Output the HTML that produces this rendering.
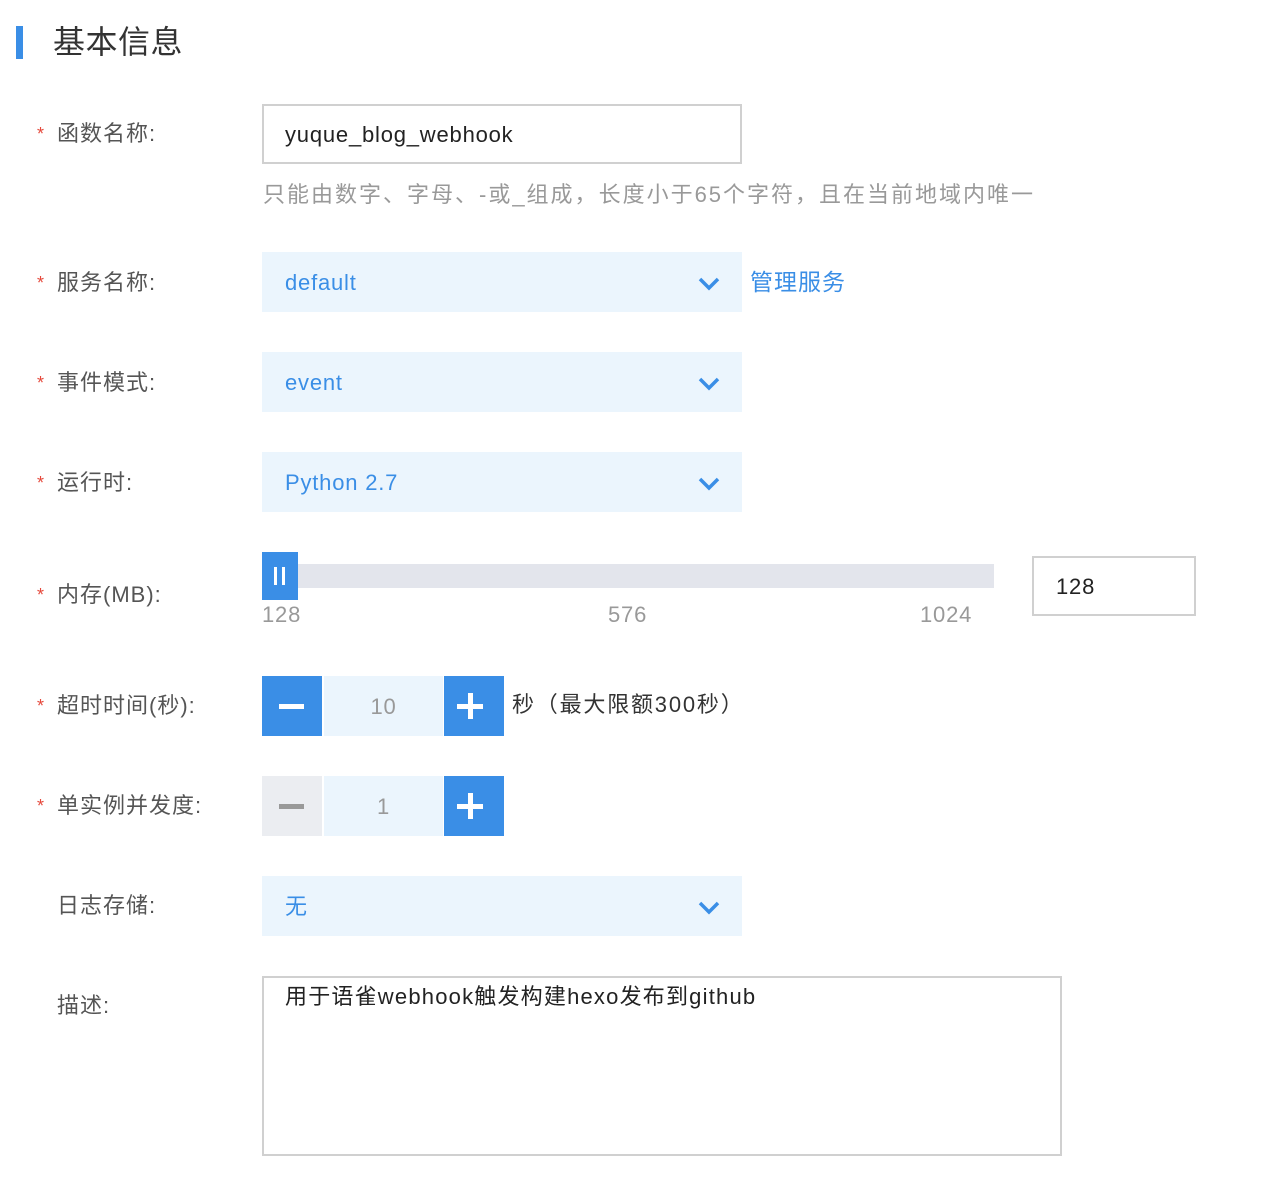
<!DOCTYPE html>
<html><head><meta charset="utf-8"><style>
body{margin:0;width:1266px;height:1194px;background:#fff;position:relative;overflow:hidden;font-family:"Liberation Sans","Noto Sans CJK SC",sans-serif;letter-spacing:0.8px;}
.a{position:absolute;white-space:nowrap;}
.lbl{position:absolute;left:37px;font-size:22px;color:#555;line-height:30px;letter-spacing:1px;}
.lbl i{font-style:normal;color:#e5483b;font-size:18px;display:inline-block;width:20px;vertical-align:top;}
.sel{position:absolute;left:262px;width:480px;height:60px;background:#ebf5fd;color:#3a8ee6;font-size:22px;line-height:62px;}
.sel span{position:absolute;left:23px;}
.sel svg{position:absolute;left:436px;top:25px;}
.btn{position:absolute;width:60px;height:60px;background:#3a8ee6;}
</style></head><body>
<div class="a" style="left:16px;top:26px;width:7px;height:33px;background:#3a8ee6"></div>
<div class="a" style="left:53px;top:22px;font-size:32px;color:#333;line-height:40px;letter-spacing:0.5px">基本信息</div>

<div class="lbl" style="top:119px"><i>*</i>函数名称:</div>
<div class="a" style="left:262px;top:104px;width:476px;height:56px;border:2px solid #d0d0d0;font-size:22px;line-height:58px;color:#222;text-indent:21px">yuque_blog_webhook</div>
<div class="a" style="left:263px;top:180px;font-size:22px;color:#999;line-height:30px;letter-spacing:2px">只能由数字、字母、-或_组成，长度小于65个字符，且在当前地域内唯一</div>

<div class="lbl" style="top:268px"><i>*</i>服务名称:</div>
<div class="sel" style="top:252px"><span>default</span><svg width="22" height="14"><path d="M2 2l9 9 9-9" stroke="#3a8ee6" stroke-width="3.5" fill="none"/></svg></div>
<div class="a" style="left:750px;top:267px;font-size:23px;color:#3a8ee6;line-height:30px;letter-spacing:1px">管理服务</div>

<div class="lbl" style="top:368px"><i>*</i>事件模式:</div>
<div class="sel" style="top:352px"><span>event</span><svg width="22" height="14"><path d="M2 2l9 9 9-9" stroke="#3a8ee6" stroke-width="3.5" fill="none"/></svg></div>

<div class="lbl" style="top:468px"><i>*</i>运行时:</div>
<div class="sel" style="top:452px"><span>Python 2.7</span><svg width="22" height="14"><path d="M2 2l9 9 9-9" stroke="#3a8ee6" stroke-width="3.5" fill="none"/></svg></div>

<div class="lbl" style="top:580px"><i>*</i>内存(MB):</div>
<div class="a" style="left:262px;top:564px;width:732px;height:24px;background:#e3e5ec"></div>
<div class="a" style="left:262px;top:552px;width:36px;height:48px;background:#3a8ee6"><div class="a" style="left:12px;top:15px;width:3px;height:18px;background:#fff"></div><div class="a" style="left:20px;top:15px;width:3px;height:18px;background:#fff"></div></div>
<div class="a" style="left:262px;top:600px;font-size:22px;color:#999;line-height:30px">128</div>
<div class="a" style="left:608px;top:600px;font-size:22px;color:#999;line-height:30px">576</div>
<div class="a" style="left:920px;top:600px;font-size:22px;color:#999;line-height:30px">1024</div>
<div class="a" style="left:1032px;top:556px;width:160px;height:56px;border:2px solid #d0d0d0;font-size:22px;line-height:58px;color:#222;text-indent:22px">128</div>

<div class="lbl" style="top:691px"><i>*</i>超时时间(秒):</div>
<div class="btn" style="left:262px;top:676px"><div class="a" style="left:17px;top:28px;width:25px;height:5px;background:#fff"></div></div>
<div class="a" style="left:324px;top:676px;width:119px;height:60px;background:#ebf5fd;color:#999;font-size:22px;line-height:62px;text-align:center">10</div>
<div class="btn" style="left:444px;top:676px"><div class="a" style="left:13px;top:28px;width:26px;height:5px;background:#fff"></div><div class="a" style="left:24px;top:17px;width:5px;height:26px;background:#fff"></div></div>
<div class="a" style="left:512px;top:690px;font-size:22px;color:#333;line-height:30px;letter-spacing:1.8px">秒（最大限额300秒）</div>

<div class="lbl" style="top:791px"><i>*</i>单实例并发度:</div>
<div class="btn" style="left:262px;top:776px;background:#ebedf1"><div class="a" style="left:17px;top:28px;width:25px;height:5px;background:#999"></div></div>
<div class="a" style="left:324px;top:776px;width:119px;height:60px;background:#ebf5fd;color:#999;font-size:22px;line-height:62px;text-align:center">1</div>
<div class="btn" style="left:444px;top:776px"><div class="a" style="left:13px;top:28px;width:26px;height:5px;background:#fff"></div><div class="a" style="left:24px;top:17px;width:5px;height:26px;background:#fff"></div></div>

<div class="lbl" style="top:891px"><i></i>日志存储:</div>
<div class="sel" style="top:876px"><span>无</span><svg width="22" height="14"><path d="M2 2l9 9 9-9" stroke="#3a8ee6" stroke-width="3.5" fill="none"/></svg></div>

<div class="lbl" style="top:991px"><i></i>描述:</div>
<div class="a" style="left:262px;top:976px;width:796px;height:176px;border:2px solid #d0d0d0"></div>
<div class="a" style="left:285px;top:982px;font-size:22px;color:#222;line-height:30px;letter-spacing:1.2px">用于语雀webhook触发构建hexo发布到github</div>
</body></html>
